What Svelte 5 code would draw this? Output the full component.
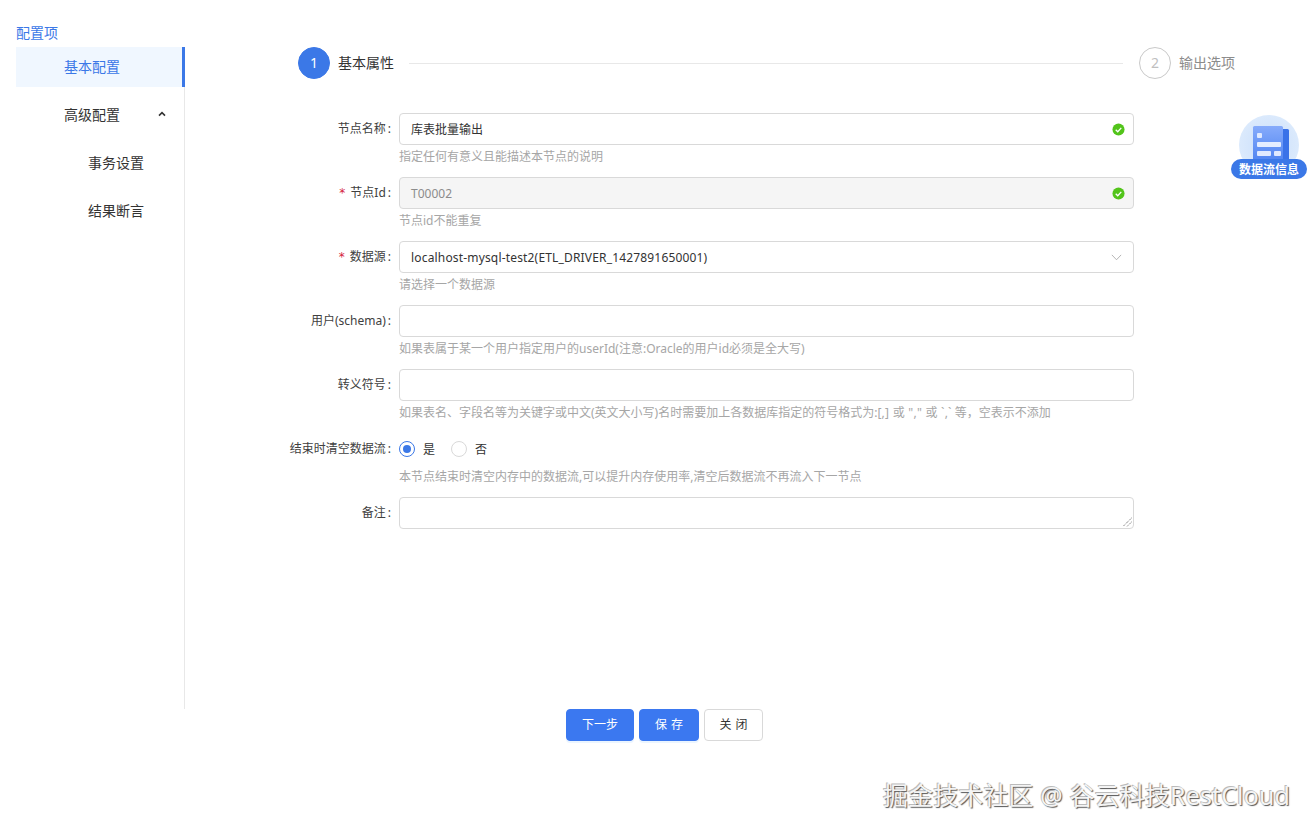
<script>
  const subItems = ['事务设置', '结果断言'];
  const ok = true;
</script>

<div class="page">
  <div class="body">
    <aside class="side">
      <div class="side-title">配置项</div>
      <nav class="nav">
        <div class="nav-item active"><span>基本配置</span></div>
        <div class="nav-item">
          <span>高级配置</span>
          <svg class="caret" viewBox="0 0 8 6" width="8" height="6"><path d="M1 4.6 4 1.6l3 3" fill="none" stroke="#333" stroke-width="1.6"/></svg>
        </div>
        {#each subItems as s}
          <div class="nav-item sub"><span>{s}</span></div>
        {/each}
      </nav>
    </aside>

    <main class="main">
      <div class="steps">
        <div class="dot on">1</div>
        <div class="step-label">基本属性</div>
        <div class="step-line"></div>
        <div class="dot">2</div>
        <div class="step-label muted">输出选项</div>
      </div>

      <form class="form">
        <div class="row">
          <div class="label">节点名称</div>
          <div class="ctl">
            <div class="input">
              <span>库表批量输出</span>
              {#if ok}<svg class="check" viewBox="0 0 14 14" width="13" height="13"><circle cx="7" cy="7" r="6.5" fill="#52c41a"/><path d="M4 7.2 6.2 9.4 10 5.2" fill="none" stroke="#fff" stroke-width="1.4"/></svg>{/if}
            </div>
            <div class="help">指定任何有意义且能描述本节点的说明</div>
          </div>
        </div>
        <div class="row">
          <div class="label"><i>*</i>节点Id</div>
          <div class="ctl">
            <div class="input disabled">
              <span>T00002</span>
              <svg class="check" viewBox="0 0 14 14" width="13" height="13"><circle cx="7" cy="7" r="6.5" fill="#52c41a"/><path d="M4 7.2 6.2 9.4 10 5.2" fill="none" stroke="#fff" stroke-width="1.4"/></svg>
            </div>
            <div class="help">节点id不能重复</div>
          </div>
        </div>
        <div class="row">
          <div class="label"><i>*</i>数据源</div>
          <div class="ctl">
            <div class="input">
              <span class="wide-latin">localhost-mysql-test2(ETL_DRIVER_1427891650001)</span>
              <svg class="chev" viewBox="0 0 12 8" width="11" height="7"><path d="M.7 1 6 6.6 11.3 1" fill="none" stroke="#aaa" stroke-width="1"/></svg>
            </div>
            <div class="help">请选择一个数据源</div>
          </div>
        </div>
        <div class="row">
          <div class="label">用户(schema)</div>
          <div class="ctl">
            <div class="input"></div>
            <div class="help">如果表属于某一个用户指定用户的userId(注意:Oracle的用户id必须是全大写)</div>
          </div>
        </div>
        <div class="row">
          <div class="label">转义符号</div>
          <div class="ctl">
            <div class="input"></div>
            <div class="help">如果表名、字段名等为关键字或中文(英文大小写)名时需要加上各数据库指定的符号格式为:<span class="quoted">[,] 或 "," 或 `,`</span> 等，空表示不添加</div>
          </div>
        </div>
        <div class="row radio-row">
          <div class="label">结束时清空数据流</div>
          <div class="ctl">
            <div class="radios">
              <span class="radio on"></span><span class="radio-text">是</span>
              <span class="radio"></span><span class="radio-text">否</span>
            </div>
            <div class="help">本节点结束时清空内存中的数据流,可以提升内存使用率,清空后数据流不再流入下一节点</div>
          </div>
        </div>
        <div class="row">
          <div class="label">备注</div>
          <div class="ctl">
            <div class="input area">
              <svg class="grip" viewBox="0 0 10 10" width="10" height="10"><path d="M9.5 1 1 9.5M9.5 5 5 9.5" stroke="#555" stroke-width="1" stroke-dasharray="1 1" fill="none"/></svg>
            </div>
          </div>
        </div>
      </form>
    </main>
  </div>

  <div class="actions">
    <button type="button" class="btn primary wide">下一步</button>
    <button type="button" class="btn primary spaced">保 存</button>
    <button type="button" class="btn spaced">关 闭</button>
  </div>

  <div class="float-info">
    <div class="disc">
      <svg viewBox="0 0 40 40" width="40" height="40">
        <defs>
          <linearGradient id="doc" x1="0" y1="0" x2="0" y2="1"><stop offset="0" stop-color="#86abfb"/><stop offset="1" stop-color="#4a80f0"/></linearGradient>
        </defs>
        <rect x="28" y="4" width="9" height="36" rx="1.5" fill="#3a72e8"/>
        <rect x="1" y="1" width="30" height="39" rx="1.5" fill="url(#doc)"/>
        <rect x="5" y="8" width="5" height="5" rx="1" fill="#dfe9ff"/>
        <rect x="5" y="17" width="24" height="5" rx="1" fill="#e4edff"/>
        <rect x="5" y="26" width="14" height="5" rx="1" fill="#dfe9ff"/>
        <rect x="22" y="26" width="7" height="5" rx="1" fill="#dfe9ff"/>
      </svg>
    </div>
    <div class="pill">数据流信息</div>
  </div>

  <div class="watermark">掘金技术社区 @ 谷云科技RestCloud</div>
</div>

<style>
  :global(body) {
    margin: 0;
    background: #fff;
  }
  .page {
    position: relative;
    height: 833px;
    overflow: hidden;
    padding-top: 25px;
    box-sizing: border-box;
    font-family: "Noto Sans", "Noto Sans CJK SC", sans-serif;
    font-size: 12px;
    color: #333;
  }
  .body {
    display: flex;
    height: 684px;
  }
  .side {
    width: 185px;
    flex: none;
    display: flex;
    flex-direction: column;
    padding-left: 16px;
    box-sizing: border-box;
  }
  .side-title {
    font-size: 14px;
    line-height: 16px;
    height: 22px;
    color: #3b78e7;
  }
  .nav {
    flex: 1;
    border-right: 1px solid #e8e8e8;
    display: flex;
    flex-direction: column;
    gap: 8px;
  }
  .nav-item {
    height: 40px;
    display: flex;
    align-items: center;
    justify-content: space-between;
    padding: 0 19px 2px 48px;
    font-size: 14px;
    color: #333;
    margin-right: -1px;
    box-sizing: border-box;
  }
  .nav-item.sub {
    padding-left: 72px;
  }
  .nav-item.active {
    background: #f0f7ff;
    color: #3b78e7;
    border-right: 3px solid #3b78e7;
  }
  .main {
    flex: 1;
    min-width: 0;
    padding: 22px 180px 0 0;
  }
  .steps {
    display: flex;
    align-items: center;
    margin: 0 -101px 0 113px;
    height: 32px;
  }
  .dot {
    width: 32px;
    height: 32px;
    box-sizing: border-box;
    border: 1px solid #c9c9c9;
    border-radius: 50%;
    display: flex;
    align-items: center;
    justify-content: center;
    padding-bottom: 2px;
    font-size: 14px;
    color: #bfbfbf;
    flex: none;
  }
  .dot.on {
    background: #3b78e7;
    border-color: #3b78e7;
    color: #fff;
  }
  .step-label {
    font-size: 14px;
    margin-left: 8px;
    padding-bottom: 2px;
    color: #333;
  }
  .step-label.muted {
    color: #8c8c8c;
  }
  .step-line {
    flex: 1;
    height: 1px;
    background: #e8e8e8;
    margin: 0 16px 0 15px;
  }
  .form {
    margin-top: 34px;
    display: flex;
    flex-direction: column;
  }
  .row {
    display: flex;
    margin-bottom: 12px;
  }
  .label {
    width: 214px;
    flex: none;
    height: 32px;
    line-height: 32px;
    text-align: right;
    color: #404040;
    white-space: nowrap;
  }
  .label::after {
    content: ":";
    margin: 0 8px 0 2px;
  }
  .label i {
    font-style: normal;
    color: #d4213d;
    margin-right: 5px;
    font-family: "DejaVu Sans", sans-serif;
    font-size: 12px;
  }
  .ctl {
    width: 735px;
    flex: none;
  }
  .input {
    height: 32px;
    box-sizing: border-box;
    border: 1px solid #d9d9d9;
    border-radius: 4px;
    padding: 0 11px;
    display: flex;
    align-items: center;
    justify-content: space-between;
    background: #fff;
    color: #333;
  }
  .input.disabled {
    background: #f5f5f5;
    color: #8c8c8c;
  }
  .wide-latin {
    letter-spacing: 0.17px;
  }
  .quoted {
    letter-spacing: 0.25px;
  }
  .check {
    margin-right: -3px;
  }
  .chev {
    margin-right: 0;
  }
  .help {
    height: 20px;
    line-height: 24px;
    color: #a6a6a6;
    white-space: nowrap;
  }
  .radios {
    height: 32px;
    display: flex;
    align-items: center;
  }
  .radio {
    width: 16px;
    height: 16px;
    box-sizing: border-box;
    border: 1px solid #d9d9d9;
    border-radius: 50%;
    flex: none;
    position: relative;
  }
  .radio.on {
    border-color: #3b78e7;
  }
  .radio.on::after {
    content: "";
    position: absolute;
    inset: 3px;
    border-radius: 50%;
    background: #3b78e7;
  }
  .radio-text {
    margin: 0 16px 0 8px;
    color: #333;
  }
  .radio-row .help {
    height: 24px;
  }
  .radio-row {
    margin-bottom: 8px;
  }
  .area {
    align-items: flex-end;
    justify-content: flex-end;
    padding: 0 1px 1px 0;
  }
  .actions {
    display: flex;
    gap: 5px;
    padding-left: 566px;
  }
  .btn {
    height: 32px;
    width: 59px;
    padding: 0 0 2px;
    border: 1px solid #d9d9d9;
    border-radius: 4px;
    background: #fff;
    color: #333;
    font: inherit;
    font-size: 12px;
  }
  .btn.primary {
    background: #3b78f0;
    border-color: #3b78f0;
    color: #fff;
    box-shadow: 0 2px 0 rgba(5, 125, 255, 0.08);
  }
  .btn.wide {
    width: 68px;
  }
  .btn.spaced {
    word-spacing: 1px;
  }
  .btn.primary.spaced {
    width: 60px;
  }
  .float-info {
    position: absolute;
    left: 1231px;
    top: 115px;
    width: 76px;
    height: 64px;
  }
  .disc {
    position: absolute;
    left: 8px;
    top: 0;
    width: 60px;
    height: 60px;
    border-radius: 50%;
    background: radial-gradient(circle at 50% 50%, #c9defb, #e3effd);
    overflow: hidden;
  }
  .disc svg {
    position: absolute;
    left: 13px;
    top: 10px;
  }
  .pill {
    position: absolute;
    left: 0;
    top: 44px;
    width: 76px;
    height: 20px;
    line-height: 21px;
    border-radius: 10px;
    background: #3b78e7;
    color: #fff;
    text-align: center;
    font-size: 12px;
    font-weight: 600;
    white-space: nowrap;
  }
  .watermark {
    position: absolute;
    left: 883px;
    top: 777px;
    font-size: 25px;
    line-height: 36px;
    letter-spacing: 0.12px;
    white-space: nowrap;
    color: #f4f4f4;
    text-shadow: 1px 1px 1px #555, -1px -1px 0 #bbb;
  }
</style>
